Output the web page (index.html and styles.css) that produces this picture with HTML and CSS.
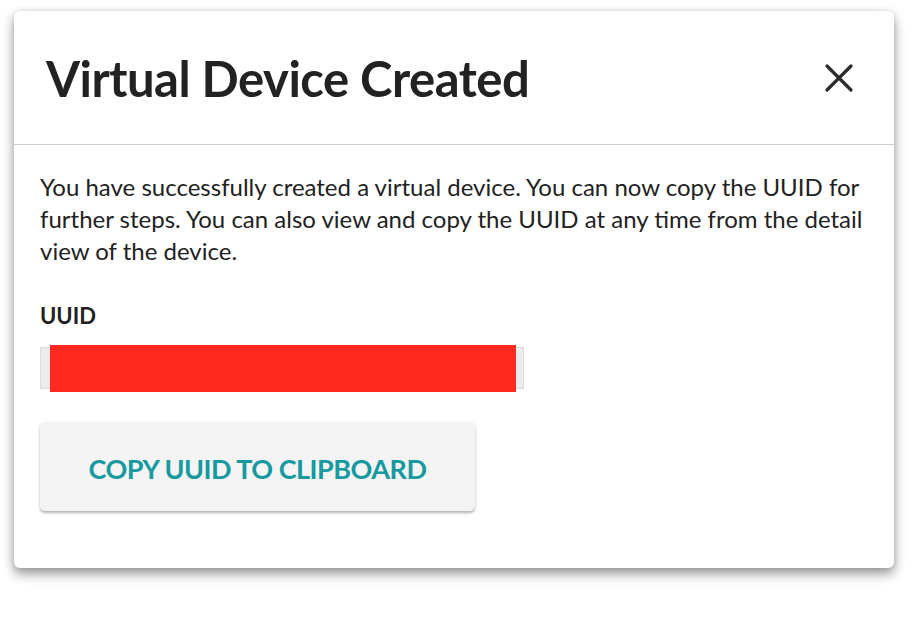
FILE: index.html
```html
<!DOCTYPE html>
<html lang="en">
  <head>
    <meta charset="utf-8" />
    <title>Virtual Device Created</title>
    <link rel="stylesheet" href="styles.css">
  </head>
  <body>
    <div class="dialog" role="dialog">
      <div class="dialog-header">
        <h2 class="dialog-title">Virtual Device Created</h2>
        <button type="button" class="close-btn" aria-label="Close">
          <svg width="30" height="30" viewBox="0 0 30 30">
            <path d="M3 3 L27 27 M27 3 L3 27" stroke="#2b2b2b" stroke-width="3.2" stroke-linecap="round" fill="none"/>
          </svg>
        </button>
      </div>
      <div class="dialog-body">
        <p class="intro">
          You have successfully created a virtual device. You can now copy the UUID for
          further steps. You can also view and copy the UUID at any time from the detail
          view of the device.
        </p>
        <label class="field-label">UUID</label>
        <div class="uuid-field">
          <span class="redacted"></span>
        </div>
        <button type="button" class="copy-btn">COPY UUID TO CLIPBOARD</button>
      </div>
    </div>
  </body>
</html>
```

FILE: styles.css
```css
html {
  background: #fff;
}

body {
  margin: 0;
  padding: 11px 20px 56px 14px;
  min-height: 624px;
  box-sizing: border-box;
  background: #fff;
  font-family: Lato, "Noto Sans", sans-serif;
  color: #222;
}

.dialog {
  width: 880px;
  background: #fff;
  border-radius: 6px;
  box-shadow: 0 6px 12px rgba(0, 0, 0, 0.4), 0 0 6px rgba(0, 0, 0, 0.1);
}

.dialog-header {
  height: 133px;
  border-bottom: 1px solid #cfcfcf;
  display: flex;
  align-items: center;
  justify-content: space-between;
  padding: 0 32px;
}

.dialog-title {
  margin: 0;
  font-size: 49px;
  font-weight: 700;
  letter-spacing: -0.5px;
}

.close-btn {
  border: 0;
  background: none;
  padding: 0;
  margin-right: 8px;
  width: 30px;
  height: 30px;
  cursor: pointer;
}

.dialog-body {
  padding: 26px 26px 57px;
}

.intro {
  margin: 0 0 33px;
  font-size: 24px;
  line-height: 32px;
}

.field-label {
  display: block;
  font-size: 22px;
  font-weight: 700;
  line-height: 32px;
  margin-bottom: 15px;
}

.uuid-field {
  width: 482px;
  height: 40px;
  background: #ececec;
  border: 1px solid #dcdcdc;
  position: relative;
}

.redacted {
  position: absolute;
  left: 9px;
  top: -3px;
  width: 466px;
  height: 47px;
  background: #ff2a1f;
}

.copy-btn {
  display: block;
  margin-top: 33px;
  width: 435px;
  height: 89px;
  padding-top: 4px;
  border: 0;
  border-radius: 5px;
  background: #f4f4f4;
  box-shadow: 0 2px 3px rgba(0, 0, 0, 0.3);
  color: #16999f;
  font-family: Lato, "Noto Sans", sans-serif;
  font-size: 27px;
  font-weight: 700;
  letter-spacing: -0.5px;
  cursor: pointer;
}
```
